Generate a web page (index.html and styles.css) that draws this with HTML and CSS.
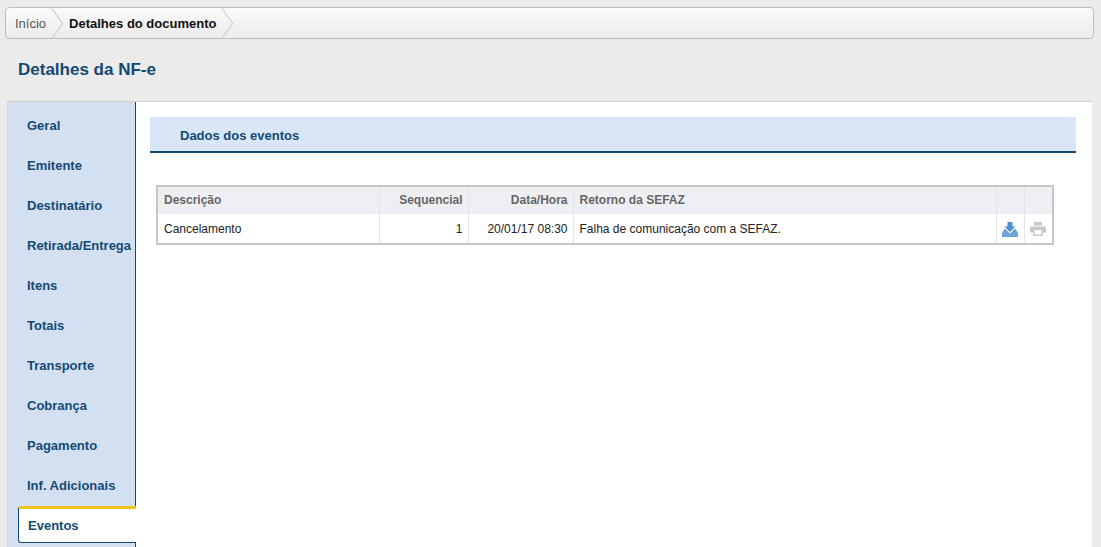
FILE: index.html
```html
<!DOCTYPE html>
<html lang="pt-BR">
<head>
<meta charset="utf-8">
<title>Detalhes da NF-e</title>
<link rel="stylesheet" href="styles.css">
</head>
<body>
<nav class="crumbs">
  <a class="crumb">Início</a>
  <a class="crumb current">Detalhes do documento</a>
</nav>
<h1 class="title">Detalhes da NF-e</h1>
<div class="panel">
  <ul class="tabs">
    <li class="tab">Geral</li>
    <li class="tab">Emitente</li>
    <li class="tab">Destinatário</li>
    <li class="tab">Retirada/Entrega</li>
    <li class="tab">Itens</li>
    <li class="tab">Totais</li>
    <li class="tab">Transporte</li>
    <li class="tab">Cobrança</li>
    <li class="tab">Pagamento</li>
    <li class="tab">Inf. Adicionais</li>
    <li class="tab active">Eventos</li>
  </ul>
  <main class="content">
    <h2 class="section">Dados dos eventos</h2>
    <table class="grid">
      <colgroup>
        <col class="c1"><col class="c2"><col class="c3"><col class="c4"><col class="c5"><col class="c6">
      </colgroup>
      <thead>
        <tr>
          <th>Descrição</th>
          <th class="right">Sequencial</th>
          <th class="right">Data/Hora</th>
          <th>Retorno da SEFAZ</th>
          <th></th>
          <th></th>
        </tr>
      </thead>
      <tbody>
        <tr>
          <td>Cancelamento</td>
          <td class="right">1</td>
          <td class="right">20/01/17 08:30</td>
          <td>Falha de comunicação com a SEFAZ.</td>
          <td class="icon">
            <svg width="16" height="15" viewBox="0 0 16 15"><path fill="#4f8fcb" d="M5.500 0h5v4.500H13.500L8 10 2.500 4.500h3z"/><path fill="#6ea3d6" d="M0 11 2.500 7H3.500L8 11.500 12.500 7h1L16 11v4H0z"/></svg>
          </td>
          <td class="icon">
            <svg width="16" height="14" viewBox="0 0 16 14"><path fill="#c8c8c8" d="M4 0h8v3.500H4z"/><path fill="#c8c8c8" fill-rule="evenodd" d="M1.500 4.500h13A1.500 1.500 0 0 1 16 6v4.500h-3V14H3v-3.500H0V6a1.500 1.500 0 0 1 1.500-1.500zM4.500 8v4.500h7V8z"/></svg>
          </td>
        </tr>
      </tbody>
    </table>
  </main>
</div>
</body>
</html>
```
FILE: styles.css
```css
* { box-sizing: border-box; }
html, body { height: 100%; }
body {
  margin: 0;
  height: 547px;
  overflow: hidden;
  background: #ebebeb;
  font-family: "Liberation Sans", Arial, sans-serif;
  font-size: 12px;
  color: #222;
  padding: 7px 7px 0 5px;
  display: flex;
  flex-direction: column;
}
.crumbs {
  height: 32px;
  flex: none;
  display: flex;
  align-items: center;
  border: 1px solid #bdbdbd;
  border-radius: 4px;
  background: linear-gradient(#fbfbfb, #ececec);
  overflow: hidden;
}
.crumb {
  position: relative;
  height: 100%;
  display: flex;
  align-items: center;
  padding: 0 22px 0 9px;
  color: #555;
  font-size: 13px;
}
.crumb::after {
  content: "";
  position: absolute;
  right: 5px;
  top: 4px;
  width: 22px;
  height: 22px;
  transform: scaleX(0.72) rotate(45deg);
  border-top: 1px solid #c4c4c4;
  border-right: 1px solid #c4c4c4;
}
.crumb.current {
  padding: 0 16px 0 1px;
  color: #111;
  font-weight: bold;
}
.crumb.current::after { right: -1px; }
.title {
  margin: 0;
  flex: none;
  height: 62px;
  padding: 21px 0 0 13px;
  font-size: 17px;
  line-height: 20px;
  color: #134a74;
  font-weight: bold;
}
.panel {
  flex: 1;
  margin: 0 2px 0 2px;
  min-height: 0;
  display: flex;
  background: #fff;
  border-top: 1px solid #cfcfcf;
}
.tabs {
  list-style: none;
  margin: 0;
  padding: 3px 0 0;
  width: 129px;
  flex: none;
  background: #d3e0f1;
  border-left: 1px solid #d8d8d8;
  border-right: 1px solid #134a74;
}
.tab {
  height: 40px;
  padding-left: 19px;
  display: flex;
  align-items: center;
  color: #134a74;
  font-size: 13px;
  font-weight: bold;
  white-space: nowrap;
}
.tab.active {
  height: 37px;
  margin: 1px -1px 0 10px;
  padding: 0 0 0 9px;
  background: #fff;
  border: 1px solid #134a74;
  border-top: 3px solid #f0c419;
  border-right: 0;
  border-radius: 3px 0 0 3px;
}
.content {
  flex: 1;
  padding: 15px 16px 0 14px;
}
.section {
  margin: 0;
  height: 36px;
  padding: 2px 0 0 30px;
  display: flex;
  align-items: center;
  background: #d9e6f7;
  border-bottom: 2px solid #134a74;
  font-size: 13px;
  font-weight: bold;
  color: #134a74;
}
.grid {
  margin: 32px 0 0 6px;
  width: 896px;
  table-layout: fixed;
  border-collapse: collapse;
  border: 2px solid #c6c6c6;
  background: #fff;
}
.c1 { width: 222px; }
.c2 { width: 89px; }
.c3 { width: 105px; }
.c4 { width: 423px; }
.c5 { width: 28px; }
.c6 { width: 29px; }
.grid th {
  height: 28px;
  padding: 0 5px 2px 6px;
  background: #eeeff3;
  border-left: 1px solid #e2e3e6;
  color: #666;
  font-size: 12px;
  font-weight: bold;
  text-align: left;
}
.grid td {
  height: 30px;
  padding: 0 5px 0 6px;
  border-left: 1px solid #e4e4e4;
  color: #222;
  font-size: 12px;
}
.grid th:first-child, .grid td:first-child { border-left: 0; }
.grid .right { text-align: right; }
.grid .icon { padding: 0; text-align: center; }
.grid svg { display: block; margin: 1px auto 0; }
```
